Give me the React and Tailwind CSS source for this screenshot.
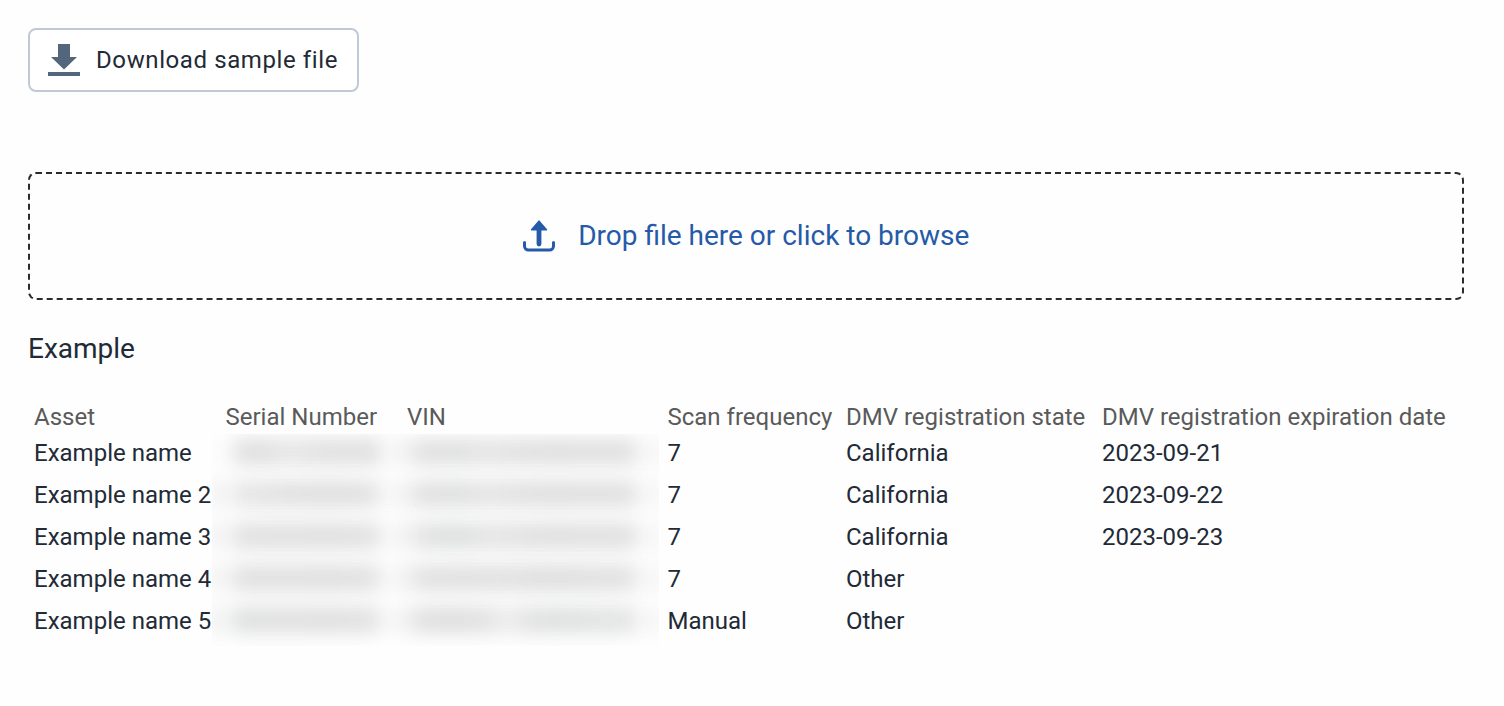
const columns = [
  "Asset",
  "Serial Number",
  "VIN",
  "Scan frequency",
  "DMV registration state",
  "DMV registration expiration date",
];

const rows = [
  { asset: "Example name", frequency: "7", state: "California", expires: "2023-09-21", place: "row-start-2" },
  { asset: "Example name 2", frequency: "7", state: "California", expires: "2023-09-22", place: "row-start-3" },
  { asset: "Example name 3", frequency: "7", state: "California", expires: "2023-09-23", place: "row-start-4" },
  { asset: "Example name 4", frequency: "7", state: "Other", expires: "", place: "row-start-5" },
  { asset: "Example name 5", frequency: "Manual", state: "Other", expires: "", place: "row-start-6" },
];

// Shades of the blurred serial number and VIN in each row
const redacted = [
  {
    edge: "bg-[#fafafa]",
    serial: "bg-[linear-gradient(90deg,#e3e3e3,#dadada_15%,#e4e4e4_38%,#dedede_60%,#dcdcdc)]",
    vin: "bg-[linear-gradient(90deg,#dfdfdf,#dbdcdc_20%,#e2e2e2_32%,#dcdcdc_60%,#dedede)]",
  },
  {
    edge: "bg-[#ebebeb]",
    serial: "bg-[linear-gradient(90deg,#e5e5e5,#dfdfdf_30%,#dbdbdb_70%,#e2e2e2)]",
    vin: "bg-[linear-gradient(90deg,#dfdfdf,#dbdcdc_20%,#e2e2e2_32%,#dcdcdc_60%,#dedede)]",
  },
  {
    edge: "bg-[#ebebeb]",
    serial: "bg-[linear-gradient(90deg,#dfdfdf,#dddddd_30%,#dcdcdc_70%,#e0e0e0)]",
    vin: "bg-[linear-gradient(90deg,#e2e2e2,#d9dbdb_20%,#e2e2e2_34%,#dcdcdc_60%,#dedede)]",
  },
  {
    edge: "bg-[#ebebeb]",
    serial: "bg-[linear-gradient(90deg,#dddede,#dddddd_30%,#dcdcdc_70%,#e0e0e0)]",
    vin: "bg-[linear-gradient(90deg,#dfdfdf,#dddddd_25%,#dfdfdf_40%,#dadada_60%,#e0e0e0)]",
  },
  {
    edge: "bg-[#e9e9e9]",
    serial: "bg-[linear-gradient(90deg,#dbdddd,#dddddd_30%,#dcdcdc_70%,#e1e1e1)]",
    vin: "bg-[linear-gradient(90deg,#dedede,#dadada_20%,#dfdfdf_33%,#ececec_43%,#dedede_53%,#dadddd_64%,#e2e2e2)]",
  },
];

function DownloadIcon() {
  return (
    <svg width="32" height="32" viewBox="0 0 32 32" fill="#53667c" aria-hidden="true">
      <path d="M10 0h12v13h7L16 25.5 3 13h7z" />
      <path d="M0 28h32v4H0z" />
    </svg>
  );
}

function UploadIcon() {
  return (
    <svg width="32" height="32" viewBox="0 0 32 32" fill="none" aria-hidden="true">
      <path
        d="M1.5 22.5v3.5a4 4 0 0 0 4 4h21a4 4 0 0 0 4-4v-3.5"
        stroke="#245aa8"
        strokeWidth="3"
        strokeLinecap="round"
      />
      <path d="M16 6v18" stroke="#245aa8" strokeWidth="4.8" strokeLinecap="round" />
      <path d="M16 1.2l7.4 8.6H8.6z" fill="#245aa8" stroke="#245aa8" strokeWidth="1.6" strokeLinejoin="round" />
    </svg>
  );
}

function RedactedCells() {
  return (
    <div className="col-start-2 col-end-4 row-start-2 row-end-7 -mt-0.5 -ml-[13.5px] w-[447px] overflow-hidden">
      {redacted.map((shade, index) => (
        <div key={index} className="flex h-[42px] items-start pt-1 opacity-85 blur-[8.5px]">
          <div className={`h-7 w-3 ${shade.edge}`} />
          <div className={`ml-2 h-7 w-[153px] ${shade.serial}`} />
          <div className="ml-3 h-7 w-3 bg-[#ebebeb]" />
          <div className={`ml-1.5 h-7 w-[231px] ${shade.vin}`} />
          <div className="ml-2.5 h-7 w-3 bg-[#efefef]" />
        </div>
      ))}
    </div>
  );
}

export default function App() {
  return (
    <div className="min-h-screen bg-[#fefefe] pt-7 pr-10 pl-7 font-[Roboto,sans-serif] text-[#222a36]">
      <button className="flex h-16 w-[331px] items-center gap-4 rounded-lg border-2 border-[#bfcad6] bg-white pl-[18px] text-2xl tracking-[0.6px] whitespace-nowrap">
        <DownloadIcon />
        Download sample file
      </button>

      {/* Drop zone */}
      <div className="mt-20 flex h-32 items-center justify-center gap-[23.5px] rounded-lg border-2 border-dashed border-[#2b2b2b] text-[28px] text-[#245aa8]">
        <UploadIcon />
        <span>Drop file here or click to browse</span>
      </div>

      <h2 className="mt-7 text-[28px] leading-[42px]">Example</h2>

      {/* Sample table */}
      <div className="mt-[30px] ml-1.5 grid w-[1420px] grid-cols-[191.5px_181.5px_260.5px_178.5px_256px_1fr] grid-rows-[36px_repeat(5,42px)] text-2xl leading-[34px] whitespace-nowrap">
        {columns.map((column) => (
          <div key={column} className="text-[#5a5a5a]">
            {column}
          </div>
        ))}
        {rows.map((row) => (
          <div key={row.asset} className={`${row.place} col-span-6 col-start-1 grid grid-cols-subgrid`}>
            <div>{row.asset}</div>
            <div className="col-start-4">{row.frequency}</div>
            <div>{row.state}</div>
            <div>{row.expires}</div>
          </div>
        ))}
        <RedactedCells />
      </div>
    </div>
  );
}
